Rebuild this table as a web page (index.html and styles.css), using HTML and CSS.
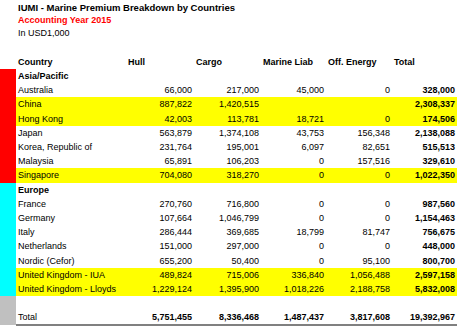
FILE: index.html
```html
<!DOCTYPE html>
<html>
<head>
<meta charset="utf-8">
<link rel="stylesheet" href="styles.css">
</head>
<body>
<div class="titles">
  <div class="t1">IUMI - Marine Premium Breakdown by Countries</div>
  <div class="t2">Accounting Year 2015</div>
  <div class="t3">In USD1,000</div>
</div>
<table class="sheet">
  <colgroup>
    <col class="c-bar"><col class="c-country"><col class="c-hull"><col class="c-cargo"><col class="c-liab"><col class="c-off"><col class="c-total">
  </colgroup>
  <thead>
    <tr class="head"><th class="bar"></th><th>Country</th><th>Hull</th><th>Cargo</th><th>Marine Liab</th><th>Off. Energy</th><th>Total</th></tr>
  </thead>
  <tbody>
    <tr><td class="bar red" rowspan="8"></td><td class="region">Asia/Pacific</td><td></td><td></td><td></td><td></td><td></td></tr>
    <tr><td>Australia</td><td class="n">66,000</td><td class="n">217,000</td><td class="n">45,000</td><td class="n">0</td><td class="n b">328,000</td></tr>
    <tr class="hl"><td>China</td><td class="n">887,822</td><td class="n">1,420,515</td><td class="n"></td><td class="n"></td><td class="n b">2,308,337</td></tr>
    <tr class="hl"><td>Hong Kong</td><td class="n">42,003</td><td class="n">113,781</td><td class="n">18,721</td><td class="n">0</td><td class="n b">174,506</td></tr>
    <tr><td>Japan</td><td class="n">563,879</td><td class="n">1,374,108</td><td class="n">43,753</td><td class="n">156,348</td><td class="n b">2,138,088</td></tr>
    <tr><td>Korea, Republic of</td><td class="n">231,764</td><td class="n">195,001</td><td class="n">6,097</td><td class="n">82,651</td><td class="n b">515,513</td></tr>
    <tr><td>Malaysia</td><td class="n">65,891</td><td class="n">106,203</td><td class="n">0</td><td class="n">157,516</td><td class="n b">329,610</td></tr>
    <tr class="hl"><td>Singapore</td><td class="n">704,080</td><td class="n">318,270</td><td class="n">0</td><td class="n">0</td><td class="n b">1,022,350</td></tr>
    <tr><td class="bar cyan" rowspan="8"></td><td class="region">Europe</td><td></td><td></td><td></td><td></td><td></td></tr>
    <tr><td>France</td><td class="n">270,760</td><td class="n">716,800</td><td class="n">0</td><td class="n">0</td><td class="n b">987,560</td></tr>
    <tr><td>Germany</td><td class="n">107,664</td><td class="n">1,046,799</td><td class="n">0</td><td class="n">0</td><td class="n b">1,154,463</td></tr>
    <tr><td>Italy</td><td class="n">286,444</td><td class="n">369,685</td><td class="n">18,799</td><td class="n">81,747</td><td class="n b">756,675</td></tr>
    <tr><td>Netherlands</td><td class="n">151,000</td><td class="n">297,000</td><td class="n">0</td><td class="n">0</td><td class="n b">448,000</td></tr>
    <tr><td>Nordic (Cefor)</td><td class="n">655,200</td><td class="n">50,400</td><td class="n">0</td><td class="n">95,100</td><td class="n b">800,700</td></tr>
    <tr class="hl"><td>United Kingdom - IUA</td><td class="n">489,824</td><td class="n">715,006</td><td class="n">336,840</td><td class="n">1,056,488</td><td class="n b">2,597,158</td></tr>
    <tr class="hl"><td>United Kingdom - Lloyds</td><td class="n">1,229,124</td><td class="n">1,395,900</td><td class="n">1,018,226</td><td class="n">2,188,758</td><td class="n b">5,832,008</td></tr>
    <tr><td class="bar grey" rowspan="2"></td><td></td><td></td><td></td><td></td><td></td><td></td></tr>
    <tr class="total"><td>Total</td><td class="n b">5,751,455</td><td class="n b">8,336,468</td><td class="n b">1,487,437</td><td class="n b">3,817,608</td><td class="n b">19,392,967</td></tr>
  </tbody>
</table>
</body>
</html>
```

FILE: styles.css
```css
html, body {
  margin: 0;
  padding: 0;
  background: #ffffff;
}
body {
  font-family: "Liberation Sans", Arial, sans-serif;
  font-size: 9px;
  color: #000000;
  width: 461px;
  height: 327px;
  overflow: hidden;
}
.titles {
  padding: 1px 0 0 18px;
  font-weight: bold;
}
.titles div {
  height: 13px;
  line-height: 13px;
}
.t1 {
  font-size: 9.5px;
}
.t2 {
  color: #ff0000;
}
.t3 {
  font-weight: normal;
}
.sheet {
  margin-top: 15px;
  border-collapse: collapse;
  table-layout: fixed;
  width: 457px;
}
.c-bar { width: 16px; }
.c-country { width: 110px; }
.c-hull { width: 68px; }
.c-cargo { width: 67px; }
.c-liab { width: 65px; }
.c-off { width: 66px; }
.c-total { width: 65px; }
.sheet th, .sheet td {
  padding: 0 2px;
  height: 14.2px;
  line-height: 14px;
  white-space: nowrap;
  overflow: visible;
  text-align: left;
  vertical-align: middle;
}
.sheet th {
  font-weight: bold;
  height: 13px;
}
.sheet .bar {
  padding: 0;
}
.red { background: #ff0000; }
.cyan { background: #00ffff; }
.grey { background: #c0c0c0; }
.region {
  font-weight: bold;
}
.hl td:not(.bar) {
  background: #ffff00;
}
.n {
  text-align: right !important;
}
.b {
  font-weight: bold;
}
.total td:not(.bar) {
  border-bottom: 2px solid #808080;
}
```
